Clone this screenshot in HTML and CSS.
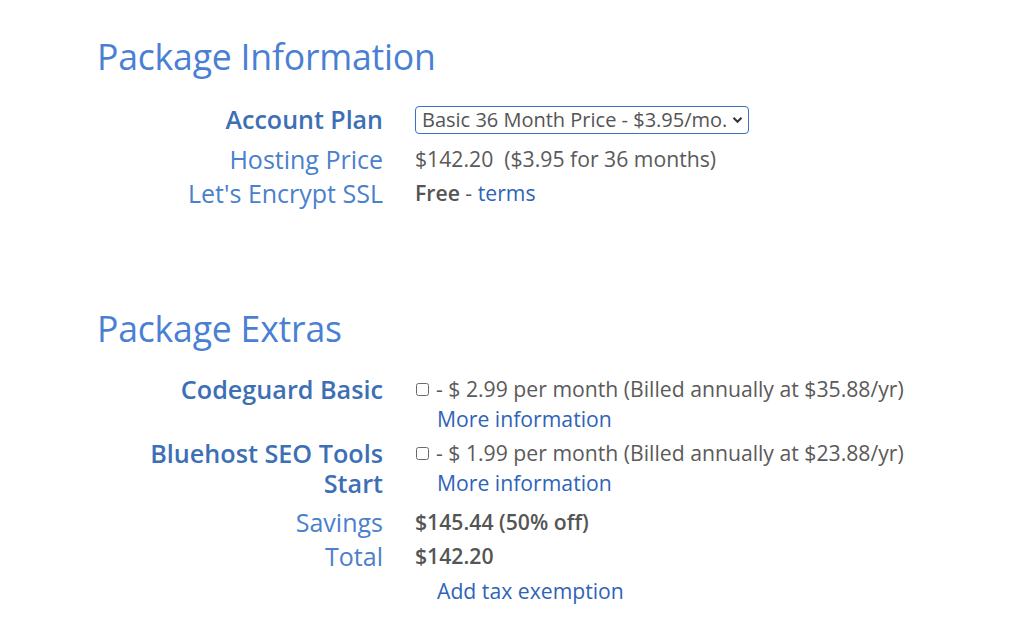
FILE: index.html
```html
<!DOCTYPE html>
<html>
<head>
<meta charset="utf-8">
<link rel="stylesheet" href="styles.css">
</head>
<body>
<div class="page">
  <section class="section">
    <h2 class="title">Package Information</h2>
    <div class="grid">
      <div class="label strong row-plan">Account Plan</div>
      <div class="value row-plan">
        <div class="select"><span>Basic 36 Month Price - $3.95/mo.</span>
          <svg class="chev" width="11" height="8" viewBox="0 0 11 8"><path d="M1.5 1.8 L5.5 5.8 L9.5 1.8" fill="none" stroke="#333" stroke-width="2"/></svg>
        </div>
      </div>
      <div class="label">Hosting Price</div>
      <div class="value">$142.20&nbsp; ($3.95 for 36 months)</div>
      <div class="label">Let's Encrypt SSL</div>
      <div class="value"><b class="bold">Free</b> - <a class="link">terms</a></div>
    </div>
  </section>
  <section class="section extras">
    <h2 class="title">Package Extras</h2>
    <div class="grid">
      <div class="label strong item">Codeguard Basic</div>
      <div class="value item">
        <div class="opt"><span class="box"></span>- $ 2.99 per month (Billed annually at $35.88/yr)</div>
        <a class="link more">More information</a>
      </div>
      <div class="label strong item"><span class="ln">Bluehost SEO Tools</span><span class="ln">Start</span></div>
      <div class="value item">
        <div class="opt"><span class="box"></span>- $ 1.99 per month (Billed annually at $23.88/yr)</div>
        <a class="link more">More information</a>
      </div>
      <div class="label sum-first">Savings</div>
      <div class="value sum-first"><b class="bold">$145.44 (50% off)</b></div>
      <div class="label">Total</div>
      <div class="value"><b class="bold">$142.20</b></div>
      <div class="label tax"></div>
      <div class="value tax"><a class="link more">Add tax exemption</a></div>
    </div>
  </section>
</div>
</body>
</html>
```
FILE: styles.css
```css
html, body { margin: 0; padding: 0; background: #fff; }
body { font-family: "Open Sans", "Noto Sans", sans-serif; color: #595959; }
.page { padding: 30px 0 0 97px; }
.title {
  margin: 0 0 20px 0;
  font-size: 35.6px;
  font-weight: 400;
  color: #4a7fd4;
  line-height: 52px;
  letter-spacing: -0.2px;
}
.extras { margin-top: 92px; }
.grid {
  display: grid;
  grid-template-columns: 286px 1fr;
  column-gap: 32px;
  align-items: start;
}
.label {
  text-align: right;
  font-size: 25px;
  line-height: 34px;
  color: #4a80cc;
  font-weight: 400;
}
.label.strong { font-weight: 600; color: #3d6fb5; line-height: 30px; font-size: 25.2px; letter-spacing: 0; }
.ln { display: block; }
.value {
  font-size: 21.2px;
  line-height: 34px;
  color: #5a5a5a;
}
.item { margin-bottom: 4px; }
.sum-first { margin-top: 3px; }
.tax { margin-top: 1px; }
.row-plan { margin-bottom: 6px; }
.label.row-plan { line-height: 34px; font-size: 25px; }
.select {
  display: inline-flex;
  align-items: center;
  height: 28px;
  margin-top: 2px;
  box-sizing: border-box;
  border: 1px solid #3b6fc4;
  border-radius: 4px;
  padding: 0 5px 0 6px;
  font-size: 20px;
  line-height: 26px;
  color: #555;
  gap: 5px;
}
.chev { display: block; }
.bold { font-weight: 600; color: #555; }
.link { color: #2f63b8; text-decoration: none; }
.more { display: block; padding-left: 22px; line-height: 30px; }
.value.tax > .more { line-height: 34px; }
.opt { display: flex; align-items: center; line-height: 30px; white-space: nowrap; }
.box {
  display: inline-block;
  box-sizing: border-box;
  width: 13px; height: 13px;
  border: 1.5px solid #6a6a6a;
  border-radius: 2.5px;
  margin: 0 7px 0 1px;
}
```
